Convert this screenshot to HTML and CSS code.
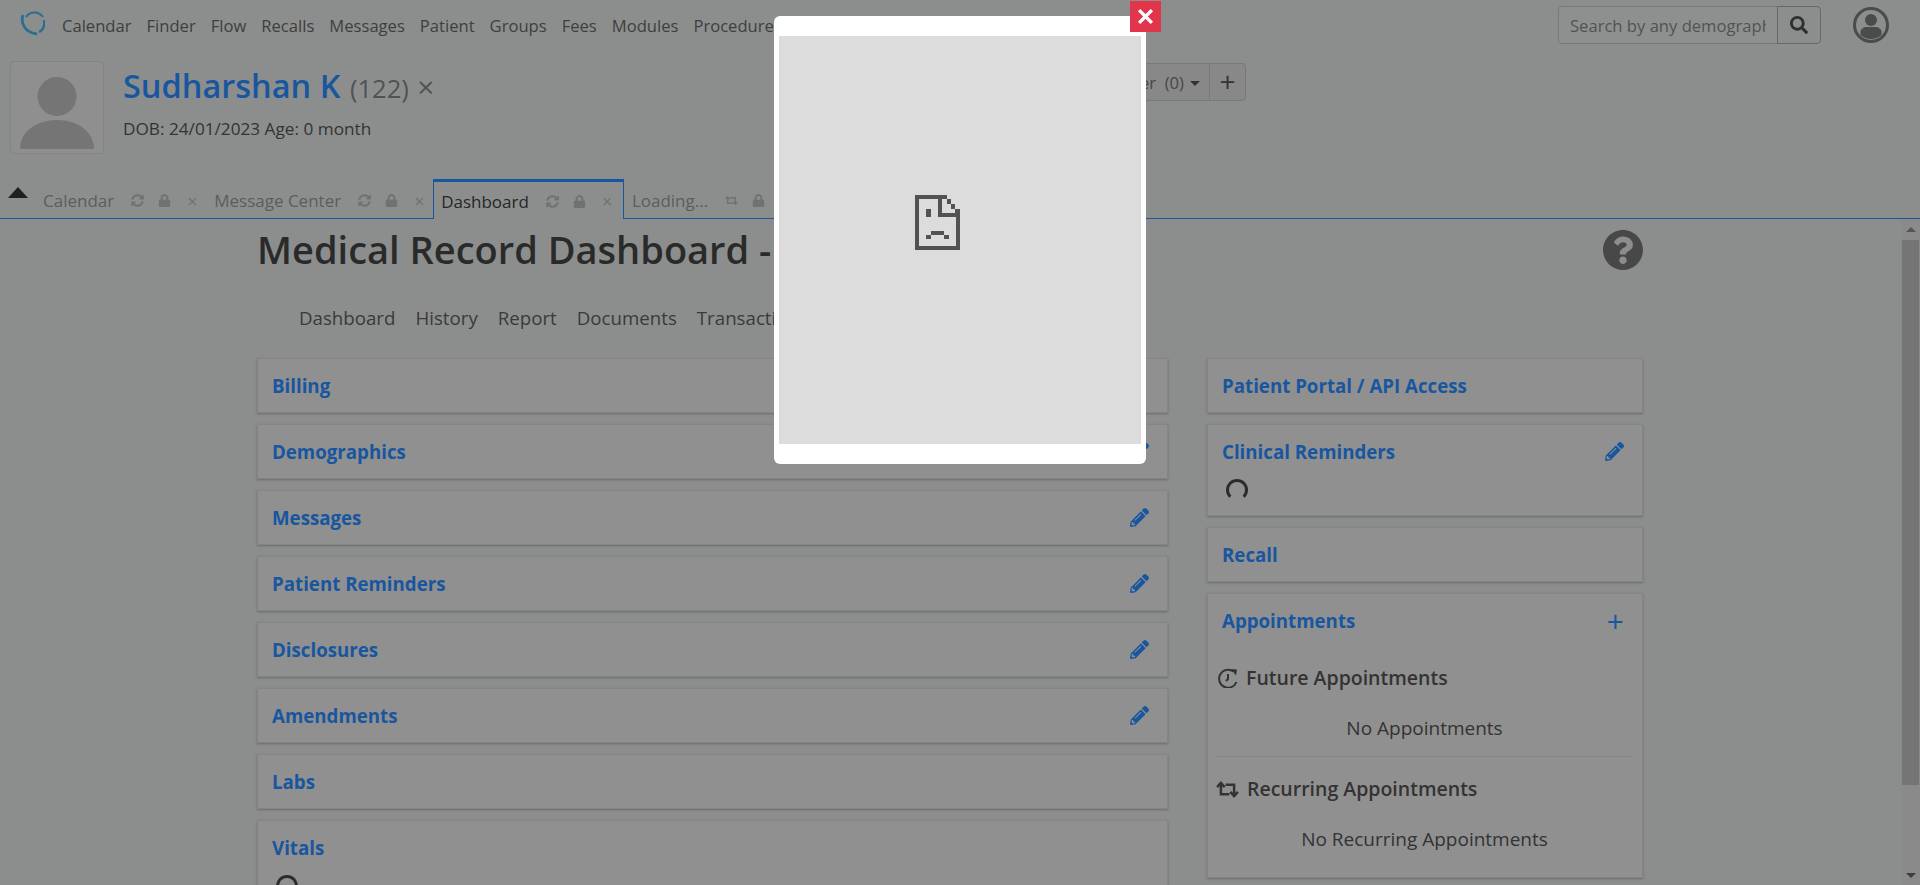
FILE: index.html
```html
<!DOCTYPE html>
<html lang="en">
<head>
    <meta charset="UTF-8">
    <meta name="viewport" content="width=device-width, initial-scale=1.0">
    <title>Medical Record Dashboard</title>
    <link rel="stylesheet" href="styles.css">
</head>
<body>
    <svg class="sprites" width="0" height="0">
        <symbol id="i-pencil" viewBox="0 0 512 512"><path fill="currentColor" d="M497.9 142.1l-46.1 46.1c-4.7 4.7-12.3 4.7-17 0l-111-111c-4.7-4.7-4.7-12.3 0-17l46.1-46.1c18.7-18.7 49.1-18.7 67.9 0l60.1 60.1c18.8 18.7 18.8 49.1 0 67.9zM284.2 99.8L21.6 362.4.4 483.9c-2.9 16.4 11.4 30.6 27.8 27.8l121.5-21.3 262.6-262.6c4.7-4.7 4.7-12.3 0-17l-111-111c-4.8-4.7-12.4-4.7-17.1 0zM124.1 339.9c-5.5-5.5-5.5-14.3 0-19.8l154-154c5.5-5.5 14.3-5.5 19.8 0s5.5 14.3 0 19.8l-154 154c-5.5 5.5-14.3 5.5-19.8 0zM88 424h48v36.3l-64.5 11.3-31.1-31.1L51.7 376H88v48z"/></symbol>
        <symbol id="i-sync" viewBox="0 0 512 512"><path fill="currentColor" d="M370.72 133.28C339.458 104.008 298.888 87.962 255.848 88c-77.458.068-144.328 53.178-162.791 126.85-1.344 5.363-6.122 9.15-11.651 9.15H24.103c-7.498 0-13.194-6.807-11.807-14.176C33.933 94.924 134.813 8 256 8c66.448 0 126.791 26.136 171.315 68.685L463.03 40.97C478.149 25.851 504 36.559 504 57.941V192c0 13.255-10.745 24-24 24H345.941c-21.382 0-32.09-25.851-16.971-40.971l41.75-41.749zM32 296h134.059c21.382 0 32.09 25.851 16.971 40.971l-41.75 41.75c31.262 29.273 71.835 45.319 114.876 45.28 77.418-.07 144.315-53.144 162.787-126.849 1.344-5.363 6.122-9.15 11.651-9.15h57.304c7.498 0 13.194 6.807 11.807 14.176C478.067 417.076 377.187 504 256 504c-66.448 0-126.791-26.136-171.315-68.685L48.97 471.03C33.851 486.149 8 475.441 8 454.059V320c0-13.255 10.745-24 24-24z"/></symbol>
        <symbol id="i-lock" viewBox="0 0 448 512"><path fill="currentColor" d="M400 224h-24v-72C376 68.2 307.8 0 224 0S72 68.2 72 152v72H48c-26.5 0-48 21.5-48 48v192c0 26.5 21.5 48 48 48h352c26.5 0 48-21.5 48-48V272c0-26.5-21.5-48-48-48zm-104 0H152v-72c0-39.7 32.3-72 72-72s72 32.3 72 72v72z"/></symbol>
        <symbol id="i-retweet" viewBox="0 0 24 18"><path fill="none" stroke="currentColor" stroke-width="2.6" d="M5 3v11h9M1 6.500l4-4.500 4 4.500M10 4h9v11M15 11.500l4 4.500 4-4.500"/></symbol>
        <symbol id="i-search" viewBox="0 0 512 512"><path fill="currentColor" d="M505 442.7L405.3 343c-4.5-4.5-10.6-7-17-7H372c27.6-35.3 44-79.7 44-128C416 93.1 322.9 0 208 0S0 93.1 0 208s93.1 208 208 208c48.3 0 92.7-16.4 128-44v16.3c0 6.4 2.5 12.5 7 17l99.7 99.7c9.4 9.4 24.6 9.4 33.9 0l28.3-28.3c9.4-9.4 9.4-24.6.1-34zM208 336c-70.7 0-128-57.2-128-128 0-70.7 57.2-128 128-128 70.7 0 128 57.2 128 128 0 70.7-57.2 128-128 128z"/></symbol>
    </svg>

    <header class="topnav">
        <svg class="logo" viewBox="0 0 25 26">
            <path fill="none" stroke="#2a6f8f" stroke-width="2" d="M6 7C9 2 18 0 23 7"/>
            <path fill="none" stroke="#2a6f8f" stroke-width="2.400" d="M24 10c1 6-1 10-5 12"/>
            <path fill="none" stroke="#2a6f8f" stroke-width="2.800" d="M3 5C0 14 6 23 17 24"/>
        </svg>
        <nav class="menu">
            <a>Calendar</a>
            <a>Finder</a>
            <a>Flow</a>
            <a>Recalls</a>
            <a>Messages</a>
            <a>Patient</a>
            <a>Groups</a>
            <a>Fees</a>
            <a>Modules</a>
            <a>Procedures</a>
        </nav>
        <form class="search">
            <input type="text" placeholder="Search by any demographics">
            <button type="button"><svg class="ico-search"><use href="#i-search"/></svg></button>
        </form>
        <svg class="account" viewBox="0 0 36 36">
            <circle cx="18" cy="18" r="16.500" fill="none" stroke="#4a4c4c" stroke-width="3"/>
            <circle cx="18" cy="13" r="6" fill="#4a4c4c"/>
            <path fill="#4a4c4c" d="M7.500 28v-3c0-3 3-5 6-5h9c3 0 6 2 6 5v3c-3 2.500-7 4-10.500 4s-7.500-1.500-10.500-4z"/>
        </svg>
    </header>

    <section class="patient-bar">
        <div class="patient">
            <div class="photo">
                <svg viewBox="0 0 74 72">
                    <ellipse cx="37" cy="19.500" rx="19.500" ry="19.500" fill="#757575"/>
                    <path fill="#757575" d="M0 72C0 55 16 43 37 43s37 12 37 29z"/>
                </svg>
            </div>
            <div class="patient-info">
                <h2 class="patient-name"><a>Sudharshan K</a> <small>(122)</small> <span class="name-x">&times;</span></h2>
                <div class="patient-dob">DOB: 24/01/2023 Age: 0 month</div>
            </div>
        </div>
        <div class="encounter">
            <button type="button" class="enc-btn">Encounter&nbsp; (0)<span class="caret"></span></button>
            <button type="button" class="enc-add">+</button>
        </div>
    </section>

    <div class="tabstrip">
        <span class="tab-toggle"></span>
        <div class="tab">
            <span class="tab-title">Calendar</span>
            <svg class="tab-ico"><use href="#i-sync"/></svg>
            <svg class="tab-ico lock"><use href="#i-lock"/></svg>
            <span class="tab-x">&times;</span>
        </div>
        <div class="tab">
            <span class="tab-title">Message Center</span>
            <svg class="tab-ico"><use href="#i-sync"/></svg>
            <svg class="tab-ico lock"><use href="#i-lock"/></svg>
            <span class="tab-x">&times;</span>
        </div>
        <div class="tab active">
            <span class="tab-title">Dashboard</span>
            <svg class="tab-ico"><use href="#i-sync"/></svg>
            <svg class="tab-ico lock"><use href="#i-lock"/></svg>
            <span class="tab-x">&times;</span>
        </div>
        <div class="tab">
            <span class="tab-title">Loading...</span>
            <svg class="tab-ico"><use href="#i-retweet"/></svg>
            <svg class="tab-ico lock"><use href="#i-lock"/></svg>
            <span class="tab-x">&times;</span>
        </div>
    </div>

    <div class="workspace">
        <main class="page">
            <div class="page-head">
                <h1>Medical Record Dashboard - Sudharshan K</h1>
                <svg class="help" viewBox="8 8 496 496"><path fill="currentColor" d="M504 256c0 136.997-111.043 248-248 248S8 392.997 8 256C8 119.083 119.043 8 256 8s248 111.083 248 248zM262.655 90c-54.497 0-89.255 22.957-116.549 63.758-3.536 5.286-2.353 12.415 2.715 16.258l34.699 26.31c5.205 3.947 12.621 3.008 16.665-2.122 17.864-22.658 30.113-35.797 57.303-35.797 20.429 0 45.698 13.148 45.698 32.958 0 14.976-12.363 22.667-32.534 33.976C247.128 238.528 216 254.941 216 296v4c0 6.627 5.373 12 12 12h56c6.627 0 12-5.373 12-12v-1.333c0-28.462 83.186-29.647 83.186-106.667 0-58.002-60.165-102-116.531-102zM256 338c-25.365 0-46 20.635-46 46 0 25.364 20.635 46 46 46s46-20.636 46-46c0-25.365-20.635-46-46-46z"/></svg>
            </div>
            <nav class="subnav">
                <a>Dashboard</a>
                <a>History</a>
                <a>Report</a>
                <a>Documents</a>
                <a>Transactions</a>
            </nav>
            <div class="columns">
                <div class="col-left">
                    <div class="card"><div class="card-head"><a>Billing</a></div></div>
                    <div class="card"><div class="card-head"><a>Demographics</a><svg class="edit"><use href="#i-pencil"/></svg></div></div>
                    <div class="card"><div class="card-head"><a>Messages</a><svg class="edit"><use href="#i-pencil"/></svg></div></div>
                    <div class="card"><div class="card-head"><a>Patient Reminders</a><svg class="edit"><use href="#i-pencil"/></svg></div></div>
                    <div class="card"><div class="card-head"><a>Disclosures</a><svg class="edit"><use href="#i-pencil"/></svg></div></div>
                    <div class="card"><div class="card-head"><a>Amendments</a><svg class="edit"><use href="#i-pencil"/></svg></div></div>
                    <div class="card"><div class="card-head"><a>Labs</a></div></div>
                    <div class="card">
                        <div class="card-head"><a>Vitals</a></div>
                        <div class="spinner"></div>
                    </div>
                </div>
                <div class="col-right">
                    <div class="card"><div class="card-head"><a>Patient Portal / API Access</a></div></div>
                    <div class="card">
                        <div class="card-head"><a>Clinical Reminders</a><svg class="edit"><use href="#i-pencil"/></svg></div>
                        <div class="spinner"></div>
                    </div>
                    <div class="card"><div class="card-head"><a>Recall</a></div></div>
                    <div class="card">
                        <div class="card-head"><a>Appointments</a><span class="add">+</span></div>
                        <div class="appts">
                            <h6 class="appt-title">
                                <svg class="appt-ico" viewBox="0 0 20 20"><path fill="none" stroke="currentColor" stroke-width="2" d="M15.500 3.500A9 9 0 1 0 18.500 14M10 6v5l-2 2"/><path fill="currentColor" d="M13 1l6 .5-1 6z"/></svg>
                                Future Appointments
                            </h6>
                            <p class="appt-empty">No Appointments</p>
                            <hr class="appt-sep">
                            <h6 class="appt-title">
                                <svg class="appt-ico wide"><use href="#i-retweet"/></svg>
                                Recurring Appointments
                            </h6>
                            <p class="appt-empty">No Recurring Appointments</p>
                        </div>
                    </div>
                </div>
            </div>
        </main>
        <div class="scrollbar">
            <span class="sb-up"></span>
            <span class="sb-thumb"></span>
            <span class="sb-down"></span>
        </div>
    </div>

    <div class="modal">
        <button type="button" class="modal-close">
            <svg viewBox="0 0 16 16"><path fill="none" stroke="#fff" stroke-width="3.200" d="M2 2l12 12M14 2L2 14"/></svg>
        </button>
        <div class="modal-frame">
            <svg class="sad-file" viewBox="0 0 45 55" shape-rendering="crispEdges">
                <path fill="#525252" d="M0 0h32v4H27v14h18v37H0zM4 4v47h37V22H23V4zM32 4h4v5h-4zM36 9h4v5h-4zM40 14h5v4h-5zM11 14h5v8h-5zM16 36h13v4H16zM11 40h5v4h-5zM29 40h5v4h-5z"/>
            </svg>
        </div>
    </div>
</body>
</html>
```

FILE: styles.css
```css
* {
    box-sizing: border-box;
}
html, body {
    height: 100%;
}
body {
    margin: 0;
    overflow: hidden;
    font-family: "Open Sans", Arial, sans-serif;
    font-size: 16.6px;
    color: #333;
    background-color: #8c8e8d;
}
.sprites {
    position: absolute;
}
a {
    color: inherit;
    text-decoration: none;
}

/* top navigation */
.topnav {
    display: flex;
    align-items: center;
    height: 53px;
    padding: 0 31px 4px 20px;
}
.logo {
    width: 25px;
    height: 26px;
    margin-top: -4px;
}
.menu {
    display: flex;
    gap: 15px;
    margin-left: 17px;
    margin-top: 2px;
    color: #3d3f3f;
    white-space: nowrap;
}
.search {
    display: flex;
    margin: 0 32px 0 auto;
}
.search input {
    width: 220px;
    height: 38px;
    padding: 2px 11px 0;
    font: inherit;
    background: #8e908f;
    border: 1px solid #777978;
    border-radius: 4px 0 0 4px;
    outline: none;
}
.search input::placeholder {
    color: #515353;
    opacity: 1;
}
.search button {
    width: 44px;
    height: 38px;
    margin-left: -1px;
    background: transparent;
    border: 1px solid #666867;
    border-radius: 0 4px 4px 0;
    display: flex;
    align-items: center;
    justify-content: center;
    color: #2f3131;
}
.ico-search {
    width: 18px;
    height: 18px;
}
.account {
    width: 36px;
    height: 36px;
}

/* patient header */
.patient-bar {
    display: flex;
    justify-content: space-between;
    margin-top: 8px;
    padding: 0 674px 0 10px;
    height: 93px;
}
.patient {
    display: flex;
}
.photo {
    width: 94px;
    height: 93px;
    padding: 15px 9px 5px;
    border: 1px solid #828483;
    border-radius: 4px;
    background: #8f8f8f;
}
.photo svg {
    display: block;
    width: 74px;
    height: 72px;
}
.patient-info {
    margin-left: 19px;
}
.patient-name {
    margin: 0;
    font-size: 32.500px;
    line-height: 50px;
    font-weight: 600;
    white-space: nowrap;
}
.patient-name a {
    color: #18569f;
}
.patient-name small {
    margin-left: 1px;
    font-size: 25.600px;
    font-weight: 400;
    color: #505254;
}
.name-x {
    font-size: 30px;
    font-weight: 400;
    color: #505254;
}
.patient-dob {
    margin-top: 3px;
    font-size: 17.2px;
    color: #333;
}
.encounter {
    display: flex;
    height: 38px;
    margin-top: 2px;
}
.encounter button {
    height: 38px;
    font: inherit;
    color: #474747;
    background: #888888;
    border: 1px solid #777978;
}
.enc-btn {
    width: 190px;
    padding: 0 9px 0 0;
    text-align: right;
    white-space: nowrap;
    border-radius: 4px 0 0 4px;
}
.caret {
    display: inline-block;
    margin-left: 6px;
    vertical-align: 3px;
    border-top: 5px solid #333;
    border-left: 5px solid transparent;
    border-right: 5px solid transparent;
}
.encounter .enc-add {
    width: 37px;
    margin-left: -1px;
    padding: 0 0 3px;
    font-size: 28px;
    line-height: 1;
    color: #333;
    border-radius: 0 4px 4px 0;
}

/* tabs */
.tabstrip {
    display: flex;
    align-items: stretch;
    height: 40px;
    margin-top: 25px;
    padding-left: 8px;
    border-bottom: 1px solid #18569f;
}
.tab-toggle {
    width: 0;
    height: 0;
    margin-top: 8px;
    border-left: 10px solid transparent;
    border-right: 10px solid transparent;
    border-bottom: 11px solid #1f1f1f;
}
.tab {
    display: flex;
    align-items: center;
    height: 40px;
    padding: 3px 9px 0 8px;
    font-size: 17px;
    color: #5b5d5e;
    white-space: nowrap;
}
.tab:first-of-type {
    margin-left: 7px;
}
.tab.active {
    color: #262626;
    background: #8c8e8d;
    border: 1px solid #18569f;
    border-top-width: 3px;
    border-bottom: 0;
    padding: 1px 11px 0 7px;
}
.tab-title {
    margin-right: 17px;
}
.tab-ico {
    width: 13px;
    height: 13px;
    margin-right: 14px;
    color: #707172;
}
.tab-ico.lock {
    margin-right: 16px;
}
.tab-x {
    width: 10px;
    font-size: 18px;
    line-height: 1;
    text-align: center;
    color: #707172;
}

/* main scrolling area */
.workspace {
    display: flex;
    height: 666px;
    overflow: hidden;
}
.page {
    flex: 1;
    padding: 0 258px 0 257px;
    overflow: hidden;
}
.page-head {
    display: flex;
    justify-content: space-between;
    align-items: center;
    height: 62px;
}
.page-head h1 {
    margin: 0 0 2px;
    font-size: 38px;
    font-weight: 600;
    color: #2a2a2a;
    white-space: nowrap;
}
.help {
    width: 40px;
    height: 40px;
    color: #484848;
}
.subnav {
    display: flex;
    gap: 20px;
    height: 77px;
    padding: 24px 0 0 42px;
    font-size: 18.700px;
    color: #3a3a3a;
}
.columns {
    display: flex;
    gap: 39px;
}
.col-left {
    width: 911px;
}
.col-right {
    width: 436px;
}
.card {
    margin-bottom: 11px;
    background: #909090;
    border: 1px solid #858585;
    box-shadow: 0 1px 2px #6a6a6a;
}
.card-head {
    display: flex;
    justify-content: space-between;
    align-items: center;
    height: 53px;
    padding: 0 14px;
    font-size: 18.700px;
    font-weight: 700;
    color: #18569f;
}
.edit {
    width: 19px;
    height: 19px;
    margin-right: 4px;
}
.add {
    margin-right: 4px;
    font-size: 30px;
    font-weight: 400;
    line-height: 1;
}
.spinner {
    width: 22px;
    height: 22px;
    margin: 1px 0 14px 18px;
    border: 3px solid #2b2b2b;
    border-bottom-color: transparent;
    border-radius: 50%;
}
.appts {
    padding: 17px 10px 0 9px;
}
.appt-title {
    display: flex;
    align-items: center;
    gap: 8px;
    margin: 0;
    font-size: 19.500px;
    font-weight: 600;
    line-height: 28px;
    color: #333;
}
.appt-ico {
    width: 20px;
    height: 20px;
    margin-left: 1px;
}
.appt-ico.wide {
    width: 23px;
    height: 17px;
    margin-left: -1px;
}
.appt-empty {
    margin: 24px 0 16px;
    text-align: center;
    font-size: 19px;
    line-height: 24px;
    color: #333;
}
.appt-sep {
    margin: 0 0 18px;
    border: 0;
    border-top: 1px solid #848484;
}
.appt-sep + .appt-title + .appt-empty {
    margin-bottom: 26px;
}

/* fake scrollbar */
.scrollbar {
    position: relative;
    width: 19px;
    background: #8a8a8a;
}
.sb-thumb {
    display: block;
    width: 17px;
    height: 545px;
    margin: 21px 0 0 1px;
    background: #757575;
}
.sb-up, .sb-down {
    position: absolute;
    left: 5px;
    width: 0;
    height: 0;
    border-left: 5px solid transparent;
    border-right: 5px solid transparent;
}
.sb-up {
    top: 8px;
    border-bottom: 5px solid #555;
}
.sb-down {
    bottom: 7px;
    border-top: 5px solid #3d3d3d;
}

/* dialog over the page */
.modal {
    position: absolute;
    left: 774px;
    top: 16px;
    width: 372px;
    height: 448px;
    padding: 20px 5px;
    background: #fff;
    border-radius: 6px;
}
.modal-frame {
    height: 408px;
    padding: 159px 0 0 136px;
    background: #dcdcdc;
}
.sad-file {
    display: block;
    width: 45px;
    height: 55px;
}
.modal-close {
    position: absolute;
    top: -15px;
    right: -15px;
    width: 31px;
    height: 31px;
    padding: 7px;
    background: #e0354a;
    border: 0;
}
.modal-close svg {
    display: block;
    width: 17px;
    height: 17px;
}
```
